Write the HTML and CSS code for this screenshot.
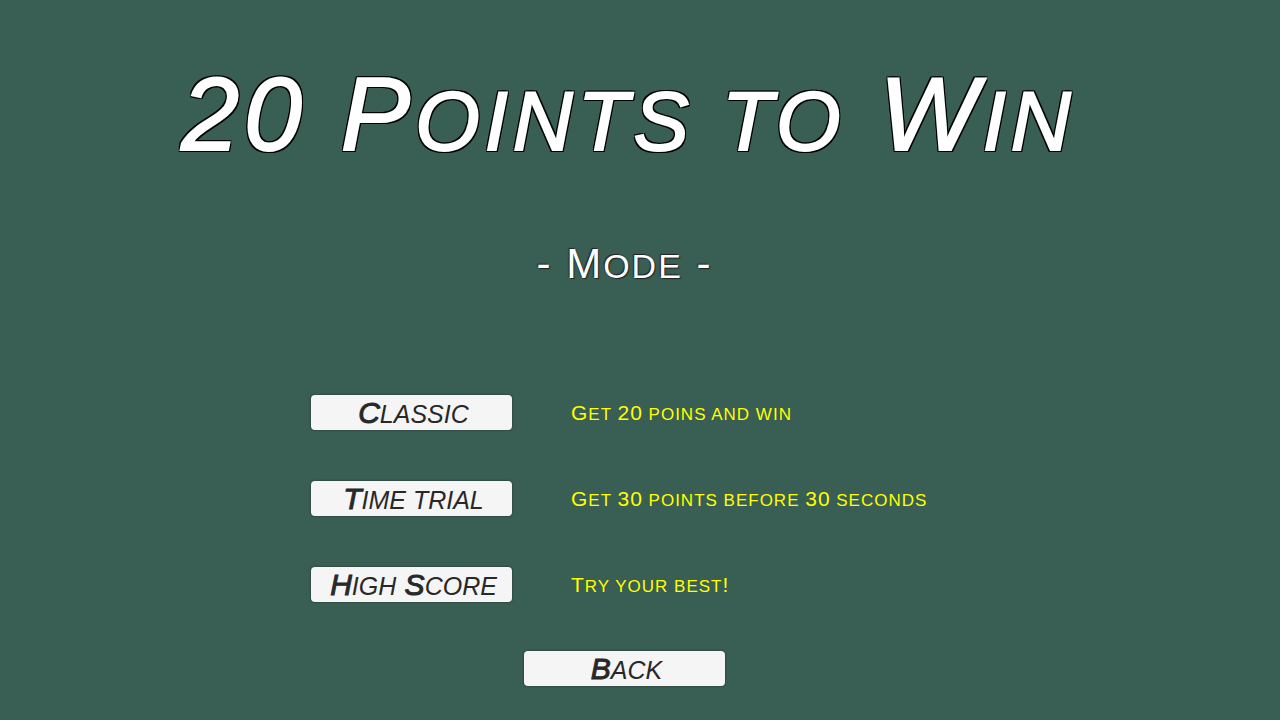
FILE: index.html
```html
<!DOCTYPE html>
<html lang="en">
<head>
  <meta charset="UTF-8">
  <meta name="viewport" content="width=device-width, initial-scale=1.0">
  <title>20 Points to Win</title>
  <link rel="stylesheet" href="styles.css">
</head>
<body>

  <main class="menu">
    <h1>20 P<small>oints to</small> W<small>in</small></h1>
    <h2>- M<small>ode</small> -</h2>

    <!-- Game modes -->
    <div class="modes">
      <button type="button" aria-describedby="classic-info">C<small>lassic</small></button>
      <p id="classic-info">G<small>et </small>20<small> poins and win</small></p>
      <button type="button" aria-describedby="time-info">T<small>ime trial</small></button>
      <p id="time-info">G<small>et </small>30<small> points before </small>30<small> seconds</small></p>
      <button type="button" aria-describedby="score-info">H<small>igh</small> S<small>core</small></button>
      <p id="score-info">T<small>ry your best</small>!</p>
    </div>

    <button type="button" class="back">B<small>ack</small></button>
  </main>

</body>
</html>
```
FILE: styles.css
```css
* {
  box-sizing: border-box;
}
body {
  margin: 0;
  background-color: #395e53;
  font-family: "Liberation Sans", Arial, sans-serif;
  text-transform: uppercase;
}
small {
  line-height: 1;
}
.menu {
  display: flex;
  flex-direction: column;
  align-items: center;
  padding: 54px 31px 34px 0;
}
h1 {
  margin: 0;
  padding-left: 8px;
  color: #fff;
  font-size: 104px;
  font-style: italic;
  font-weight: normal;
  line-height: 120px;
  letter-spacing: 5px;
  -webkit-text-stroke: 2px #fff;
  text-shadow: 2px 2px 0 #000, -2px 2px 0 #000, 2px -2px 0 #000, -2px -2px 0 #000,
    2px 0 0 #000, -2px 0 0 #000, 0 2px 0 #000, 0 -2px 0 #000;
}
h1 small {
  font-size: 83px;
}
h2 {
  margin: 66px 0 0;
  color: #fff;
  font-size: 42px;
  font-weight: normal;
  line-height: 48px;
  letter-spacing: 2px;
  text-shadow: 1px 1px 1px #222, -1px -1px 1px #222;
}
h2 small {
  font-size: 34px;
}
.modes {
  display: grid;
  grid-template-columns: 201px 367px;
  align-items: center;
  gap: 51px 59px;
  margin-top: 107px;
}
.modes p {
  margin: 0;
  color: #ff0;
  font-size: 21px;
  line-height: 24px;
  letter-spacing: 1px;
}
.modes small {
  font-size: 17px;
}
button {
  width: 201px;
  height: 35px;
  padding: 0 0 0 4px;
  border: none;
  border-radius: 4px;
  background-color: #f5f5f5;
  color: #282828;
  font: italic normal 30px "Liberation Sans", Arial, sans-serif;
  text-transform: uppercase;
  -webkit-text-stroke: 1px #282828;
  box-shadow: 0 0 2px #222;
  cursor: pointer;
}
button small,
.modes button small {
  font-size: 25px;
  -webkit-text-stroke: 0;
}
button:hover {
  background-color: #e0e0e0;
}
.back {
  margin-top: 49px;
}
```
